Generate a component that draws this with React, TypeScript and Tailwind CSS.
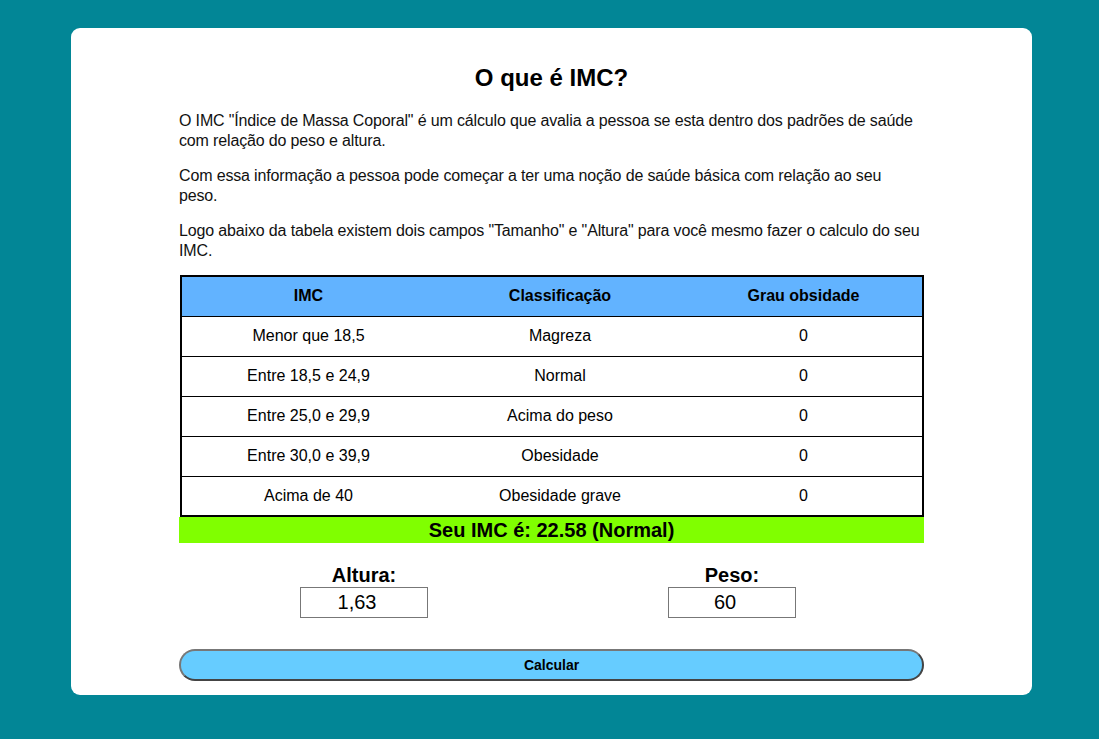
const rows = [
  ['Menor que 18,5', 'Magreza', '0'],
  ['Entre 18,5 e 24,9', 'Normal', '0'],
  ['Entre 25,0 e 29,9', 'Acima do peso', '0'],
  ['Entre 30,0 e 39,9', 'Obesidade', '0'],
  ['Acima de 40', 'Obesidade grave', '0'],
]

export default function App() {
  return (
    <div
      className="min-h-[739px] bg-[#028696] pt-[28px] pb-[44px]"
      style={{ fontFamily: '"Liberation Sans", Arial, sans-serif' }}
    >
      <div className="ml-[71px] w-[961px] bg-white rounded-[9px] h-[667px] px-[108px] pt-[36px]">
        <h2 className="text-center text-[24px] font-bold text-black leading-[28px]">O que é IMC?</h2>

        <div className="mt-[19px] text-[16px] leading-[19.5px] tracking-[-0.15px] text-[#111] space-y-[16px]">
          <p>
            O IMC "Índice de Massa Coporal" é um cálculo que avalia a pessoa se esta dentro dos padrões de saúde
            <br />
            com relação do peso e altura.
          </p>
          <p>
            Com essa informação a pessoa pode começar a ter uma noção de saúde básica com relação ao seu
            <br />
            peso.
          </p>
          <p>
            Logo abaixo da tabela existem dois campos "Tamanho" e "Altura" para você mesmo fazer o calculo do seu
            <br />
            IMC.
          </p>
        </div>

        <table className="mt-[15px] ml-px w-[744px] border-2 border-black border-collapse text-[16px] text-black">
          <thead>
            <tr className="bg-[#62b3ff] h-[40px]">
              <th className="w-[254px] font-bold">IMC</th>
              <th className="w-[250px] font-bold">Classificação</th>
              <th className="font-bold">Grau obsidade</th>
            </tr>
          </thead>
          <tbody>
            {rows.map((r, i) => (
              <tr key={i} className="h-[40px] border-t border-black">
                {r.map((c, j) => (
                  <td key={j} className="text-center">
                    {c}
                  </td>
                ))}
              </tr>
            ))}
          </tbody>
        </table>

        <div className="bg-[#80ff00] h-[26px] flex items-center justify-center text-[20px] font-bold text-black">
          Seu IMC é: 22.58 (Normal)
        </div>

        <div className="grid grid-cols-[370px_366px] mt-[21px]">
          <div className="flex flex-col items-center">
            <label className="text-[20px] font-bold leading-[23px] text-black">Altura:</label>
            <input
              defaultValue="1,63"
              className="w-[128px] h-[31px] border border-[#777] pr-[14px] text-center text-[20px] text-black outline-none"
            />
          </div>
          <div className="flex flex-col items-center">
            <label className="text-[20px] font-bold leading-[23px] text-black">Peso:</label>
            <input
              defaultValue="60"
              className="w-[128px] h-[31px] border border-[#777] pr-[14px] text-center text-[20px] text-black outline-none"
            />
          </div>
        </div>

        <button className="mt-[31px] w-[745px] h-[32px] rounded-[16px] bg-[#66ccff] border-2 border-[#444] border-t-[#777] border-l-[#777] text-[14px] font-bold text-black">
          Calcular
        </button>
      </div>
    </div>
  )
}
